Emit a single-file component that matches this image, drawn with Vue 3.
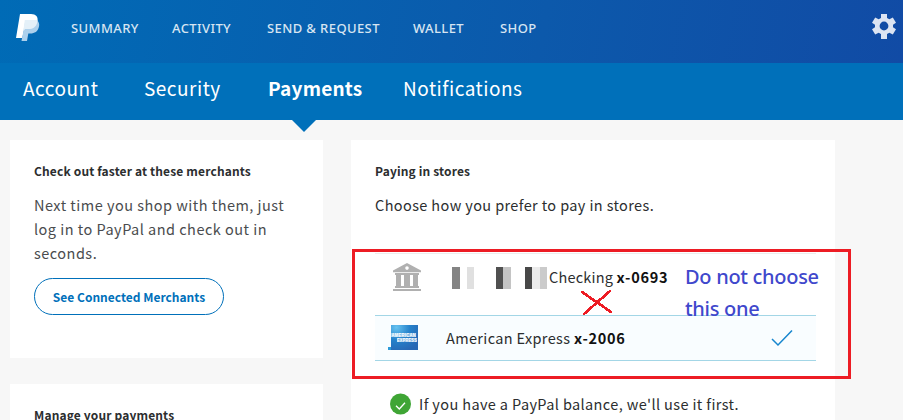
<template>
  <div class="app">
    <header class="topbar">
      <svg class="logo" viewBox="0 0 24 28" width="24" height="28">
        <path fill="#fff" d="M4 0h11c5 0 7.300 2.800 6.500 7.500-1 5.500-4.600 8.500-10 8.500H8L6.300 24H0z" />
        <path fill="#acd0ec" d="M9.500 6H20.500C23 7.500 23.600 10 23 12.500c-1.100 5-4.300 7-8.700 7h-2L11 27H5.500z" />
        <path fill="#e4f0f8" d="M8.800 6h12.500v2.500c-1.200 4.600-4.300 6.500-8.800 6.500H9.200L7.300 17z" />
      </svg>
      <nav class="main-nav">
        <a v-for="item in mainNav" :key="item">{{ item }}</a>
      </nav>
      <svg class="gear" viewBox="0 0 26 26" width="26" height="26">
        <path
          fill="#dce4f2"
          fill-rule="evenodd"
          d="M10 1h6v4l2.400 1.300L21.800 4.500 25 9.800 22 11.800v2.400l3 2-3.200 5.300-3.400-1.800L16 21v5h-6v-5l-2.400-1.300-3.400 1.800L1 16.200l3-2v-2.400l-3-2 3.200-5.300 3.400 1.800L10 5zM13 8.600a4.400 4.400 0 1 0 0 8.800 4.400 4.400 0 0 0 0-8.800z"
        />
      </svg>
    </header>

    <nav class="sub-nav">
      <a
        v-for="tab in tabs"
        :key="tab"
        :class="{ active: tab === activeTab }"
        @click="activeTab = tab"
      >{{ tab }}</a>
    </nav>

    <main class="content">
      <div class="side">
        <section class="card merchants">
          <h2>Check out faster at these merchants</h2>
          <p>Next time you shop with them, just<br />log in to PayPal and check out in<br />seconds.</p>
          <button>See Connected Merchants</button>
        </section>
        <section class="card manage">
          <h2>Manage your payments</h2>
        </section>
      </div>

      <section class="card stores">
        <h2>Paying in stores</h2>
        <p>Choose how you prefer to pay in stores.</p>

        <div class="row">
          <svg class="bank" viewBox="0 0 30 30" width="30" height="30">
            <g fill="#b0b0b0">
              <path fill-rule="evenodd" d="M1 8.500 15 1l14 7.500v1.700H1zM15 4.300a1.800 1.800 0 1 0 0 3.600 1.800 1.800 0 0 0 0-3.600z" />
              <path d="M3 11h24v2H3zM3 24h24v2H3zM1 27h28v2H1z" />
              <path d="M4 13h4v11H4zM13 13h4v11h-4zM22 13h4v11h-4z" />
            </g>
            <path stroke="#b0b0b0" stroke-width="1" d="M8.500 13v11M12.500 13v11M17.500 13v11M21.500 13v11" />
          </svg>
          <svg class="masked" viewBox="0 0 95 22" width="95" height="22" shape-rendering="crispEdges">
            <rect v-for="b in blocks" :key="b.x" :x="b.x" y="0" :width="b.w" height="22" :fill="b.fill" />
          </svg>
          <span class="checking">Checking <b>x-0693</b></span>
        </div>

        <div class="row selected">
          <svg class="amex" viewBox="0 0 31 26" width="31" height="26">
            <defs>
              <radialGradient id="amex-fill" cx="0.2" cy="0.1" r="1">
                <stop offset="0" stop-color="#65c2f0" />
                <stop offset="0.5" stop-color="#2582cb" />
                <stop offset="1" stop-color="#2867b4" />
              </radialGradient>
            </defs>
            <path fill="url(#amex-fill)" d="M3 0h27v25H3z" />
            <path fill="#2d9bd9" d="M0 22h3v3H0z" />
            <g fill="#d5eafa" fill-opacity="0.55">
              <path d="M3 8h25v4H3zM9 13h20v4H9z" />
            </g>
            <g fill="#fff" font-family="'Liberation Sans', sans-serif" font-weight="bold" font-size="5">
              <text x="3.500" y="12" textLength="24.500" lengthAdjust="spacingAndGlyphs">AMERICAN</text>
              <text x="9" y="17" textLength="20" lengthAdjust="spacingAndGlyphs">EXPRESS</text>
            </g>
          </svg>
          <span class="express">American Express <b>x-2006</b></span>
          <svg class="tick" viewBox="0 0 22 18" width="22" height="18">
            <path fill="none" stroke="#1786ce" stroke-width="1.500" d="m1 10 6 6L21 1.500" />
          </svg>
        </div>

        <div class="balance">
          <svg viewBox="0 0 22 22" width="22" height="22">
            <circle cx="11.500" cy="11" r="10.500" fill="#3fa535" />
            <path fill="none" stroke="#fff" stroke-width="1.300" d="m7 12.700 3.300 3.300 5.700-6.200" />
          </svg>
          <span>If you have a PayPal balance, we'll use it first.</span>
        </div>
      </section>
    </main>

    <!-- markup drawn on top of the page -->
    <div class="highlight"></div>
    <svg class="cross" viewBox="0 0 34 28" width="34" height="28" shape-rendering="crispEdges">
      <path stroke="#ed1c24" stroke-width="2.700" stroke-linecap="round" d="M3 4l29 20M5 26 31 3" />
    </svg>
    <div class="note">Do not choose<br />this one</div>
  </div>
</template>

<script setup>
import { ref } from 'vue'

const mainNav = ['SUMMARY', 'ACTIVITY', 'SEND & REQUEST', 'WALLET', 'SHOP']

const tabs = ['Account', 'Security', 'Payments', 'Notifications']
const activeTab = ref('Payments')

// pixelated bank name
const blocks = [
  { x: 0, w: 8, fill: '#848484' },
  { x: 15, w: 7, fill: '#e0e0e0' },
  { x: 44, w: 7, fill: '#505050' },
  { x: 51, w: 8, fill: '#c4c4c4' },
  { x: 73, w: 7, fill: '#484848' },
  { x: 80, w: 8, fill: '#ebebeb' },
  { x: 88, w: 7, fill: '#cbcbcb' }
]
</script>

<style>
body {
  margin: 0;
  overflow: hidden;
}
</style>

<style scoped>
.app {
  position: relative;
  box-sizing: border-box;
  height: 420px;
  overflow: hidden;
  background: #f7f7f7;
  color: #2c2e2f;
  font-family: 'Noto Sans CJK SC', 'Noto Sans', sans-serif;
}

.topbar {
  display: flex;
  align-items: flex-start;
  height: 63px;
  padding-left: 16px;
  background: linear-gradient(100deg, #006bb6 0%, #0c59ab 60%, #114ba5 100%);
}

.logo {
  margin-top: 14px;
}

.main-nav {
  display: grid;
  flex: 1;
  grid-template-columns: 101px 95px 146px 87px auto;
  margin-left: 31px;
  padding-top: 18px;
  font-family: 'Noto Sans', 'Open Sans', sans-serif;
  font-size: 13px;
  font-weight: 500;
  line-height: 20px;
  letter-spacing: 0.4px;
  color: #d7e5f2;
  white-space: nowrap;
}

.gear {
  margin: 13px 6px 0 0;
}

.sub-nav {
  display: grid;
  grid-template-columns: 121px 124px 135px auto;
  height: 57px;
  padding-left: 23px;
  background: #0070ba;
  color: #fff;
  font-size: 19px;
  line-height: 49px;
  letter-spacing: 0.5px;
}

.sub-nav a {
  cursor: pointer;
}

.sub-nav .active {
  position: relative;
  font-weight: bold;
  letter-spacing: 0.2px;
}

.sub-nav .active::after {
  content: '';
  position: absolute;
  left: 24px;
  top: 57px;
  border: 12px solid transparent;
  border-top-color: #0070ba;
  border-bottom: 0;
}

.content {
  display: flex;
  align-items: flex-start;
  gap: 28px;
  padding: 20px 10px 0;
}

.side {
  display: flex;
  flex-direction: column;
  gap: 26px;
  width: 313px;
}

.card {
  box-sizing: border-box;
  padding: 21px 24px 0;
  background: #fff;
}

.card h2 {
  margin: 0;
  font-size: 12px;
  line-height: 20px;
  letter-spacing: 0.15px;
}

.card p {
  margin: 12px 0 0;
  font-size: 14.5px;
  line-height: 24px;
  letter-spacing: 0.48px;
  white-space: nowrap;
}

.merchants {
  height: 218px;
}

.merchants p {
  color: #4a4c4e;
}

.merchants button {
  width: 190px;
  height: 37px;
  margin-top: 13px;
  padding: 0;
  border: 1px solid #0070ba;
  border-radius: 19px;
  background: #fff;
  color: #0070ba;
  font-family: inherit;
  font-size: 12px;
  font-weight: bold;
}

.manage {
  height: 60px;
}

.stores {
  width: 484px;
  height: 300px;
}

.stores p {
  letter-spacing: 0.38px;
}

.row {
  display: flex;
  align-items: center;
  box-sizing: border-box;
  width: 441px;
  height: 62px;
  margin-top: 36px;
  padding-bottom: 15px;
  border-top: 1px solid #ececec;
  font-size: 14.5px;
  letter-spacing: 0.35px;
  white-space: nowrap;
}

.row b {
  color: #111;
  letter-spacing: 0.7px;
}

.bank {
  margin-left: 17px;
}

.masked {
  margin: 2px 2px 0 30px;
}

.checking {
  margin-top: -2px;
  letter-spacing: 0.2px;
}

.row.selected {
  height: 46px;
  margin-top: 0;
  padding-bottom: 0;
  border-top: 1px solid #a3d6e6;
  border-bottom: 1px solid #a3d6e6;
  background: #f9fdff;
}

.amex {
  margin-left: 13px;
}

.express {
  margin: -2px 0 0 27px;
}

.tick {
  margin: 0 23px 0 auto;
}

.balance {
  display: flex;
  align-items: center;
  gap: 8px;
  margin: 32px 0 0 14px;
  font-size: 14.5px;
  line-height: 22px;
  letter-spacing: 0.38px;
  white-space: nowrap;
}

.highlight {
  position: absolute;
  left: 352px;
  top: 249px;
  box-sizing: border-box;
  width: 499px;
  height: 130px;
  border: 3px solid #ed1c24;
}

.cross {
  position: absolute;
  left: 579px;
  top: 288px;
}

.note {
  position: absolute;
  left: 685px;
  top: 261px;
  height: 55px;
  overflow: hidden;
  color: #3f48cc;
  font-family: 'Noto Sans', 'Open Sans', sans-serif;
  font-size: 20px;
  font-weight: 500;
  line-height: 32px;
  letter-spacing: -0.3px;
  white-space: nowrap;
}
</style>
